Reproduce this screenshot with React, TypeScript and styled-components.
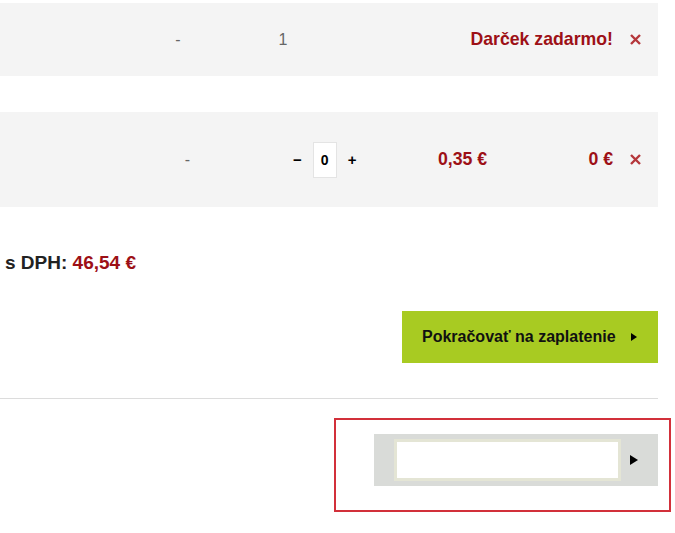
import React from "react";
import styled, { createGlobalStyle } from "styled-components";

const GlobalStyle = createGlobalStyle`
  body {
    margin: 0;
    background: #fff;
    font-family: "Liberation Sans", Arial, sans-serif;
  }
`;

const RED = "#9d1016";

const Page = styled.div`
  width: 675px;
  padding-top: 3px;
  display: flex;
  flex-direction: column;
`;

const Content = styled.div`
  width: 658px;
  display: flex;
  flex-direction: column;
`;

const CartRow = styled.div<{ $cols: string; $height: number }>`
  display: grid;
  grid-template-columns: ${({ $cols }) => $cols};
  align-items: center;
  height: ${({ $height }) => $height}px;
  background: #f4f4f4;
  & + & {
    margin-top: 36px;
  }
`;

const Cell = styled.div<{ $align?: string }>`
  text-align: ${({ $align }) => $align || "center"};
  font-size: 16px;
  white-space: nowrap;
`;

const Muted = styled(Cell)`
  color: #666;
  font-weight: normal;
`;

const Price = styled(Cell)`
  color: ${RED};
  font-weight: bold;
  font-size: 17.7px;
`;

const Remove = styled.button`
  justify-self: center;
  display: flex;
  border: 0;
  background: none;
  padding: 0;
  color: #b5373b;
  cursor: pointer;
`;

const Quantity = styled.div`
  display: flex;
  align-items: center;
  gap: 11px;
  font-weight: bold;
  font-size: 15px;
  color: #000;
`;

const QtyInput = styled.input`
  width: 24px;
  height: 36px;
  box-sizing: border-box;
  border: 1px solid #e4e4e4;
  background: #fff;
  text-align: center;
  padding: 0;
  font-family: "Liberation Sans", Arial, sans-serif;
  font-weight: bold;
  font-size: 14px;
  color: #000;
`;

const Total = styled.div`
  margin-top: 44px;
  padding-left: 5px;
  font-size: 19px;
  line-height: 24px;
  font-weight: bold;
  color: #222;
  span {
    color: ${RED};
  }
`;

const Actions = styled.div`
  display: flex;
  justify-content: flex-end;
  margin-top: 36px;
`;

const CheckoutButton = styled.button`
  width: 256px;
  height: 52px;
  border: 0;
  background: #a8cb22;
  display: flex;
  align-items: center;
  justify-content: space-between;
  padding: 0 21px 0 20px;
  white-space: nowrap;
  font-family: "Liberation Sans", Arial, sans-serif;
  font-size: 16px;
  font-weight: bold;
  color: #111;
  cursor: pointer;
`;

const Arrow = styled.span<{ $w: number; $h: number }>`
  flex-shrink: 0;
  width: 0;
  height: 0;
  border-top: ${({ $h }) => $h / 2}px solid transparent;
  border-bottom: ${({ $h }) => $h / 2}px solid transparent;
  border-left: ${({ $w }) => $w}px solid #000;
`;

const Divider = styled.hr`
  margin: 35px 0 0;
  border: 0;
  border-top: 1px solid #dcdcdc;
`;

const CouponArea = styled.div`
  display: flex;
  justify-content: flex-end;
  padding-right: 4px;
  margin-top: 19px;
`;

const Highlight = styled.div`
  border: 2px solid #d2303a;
  padding: 14px 11px 24px 38px;
`;

const CouponForm = styled.form`
  width: 284px;
  height: 52px;
  box-sizing: border-box;
  background: #d9dbd8;
  display: flex;
  align-items: center;
  padding-left: 20px;
`;

const CouponInput = styled.input`
  width: 227px;
  height: 42px;
  box-sizing: border-box;
  border: 3px solid #e4e5d5;
  background: #fff;
  outline: none;
`;

const CouponSubmit = styled.button`
  flex: 1;
  height: 100%;
  border: 0;
  background: none;
  display: flex;
  align-items: center;
  padding: 0 0 0 9px;
  cursor: pointer;
`;

const CloseIcon = () => (
  <svg width="11" height="11" viewBox="0 0 11 11">
    <path
      d="M1 1 L10 10 M10 1 L1 10"
      stroke="currentColor"
      strokeWidth="2.4"
      fill="none"
    />
  </svg>
);

export default function App() {
  return (
    <>
      <GlobalStyle />
      <Page>
        <Content>
          <CartRow $cols="158px 40px 65px 40px 1fr 45px" $height={73}>
            <div />
            <Muted>-</Muted>
            <div />
            <Muted>1</Muted>
            <Price $align="right">Darček zadarmo!</Price>
            <Remove title="Odstrániť">
              <CloseIcon />
            </Remove>
          </CartRow>
          <CartRow
            $cols="167px 41px 85px 62px 83px 60px 1fr 45px"
            $height={95}
          >
            <div />
            <Muted>-</Muted>
            <div />
            <Quantity>
              <span>−</span>
              <QtyInput defaultValue="0" />
              <span>+</span>
            </Quantity>
            <div />
            <Price $align="left">0,35 €</Price>
            <Price $align="right">0 €</Price>
            <Remove title="Odstrániť">
              <CloseIcon />
            </Remove>
          </CartRow>
          <Total>
            s DPH: <span>46,54 €</span>
          </Total>
          <Actions>
            <CheckoutButton>
              <span>Pokračovať na zaplatenie</span>
              <Arrow $w={6} $h={9} />
            </CheckoutButton>
          </Actions>
          <Divider />
        </Content>
        <CouponArea>
          <Highlight>
            <CouponForm onSubmit={(e) => e.preventDefault()}>
              <CouponInput type="text" />
              <CouponSubmit type="submit">
                <Arrow $w={8} $h={10} />
              </CouponSubmit>
            </CouponForm>
          </Highlight>
        </CouponArea>
      </Page>
    </>
  );
}
